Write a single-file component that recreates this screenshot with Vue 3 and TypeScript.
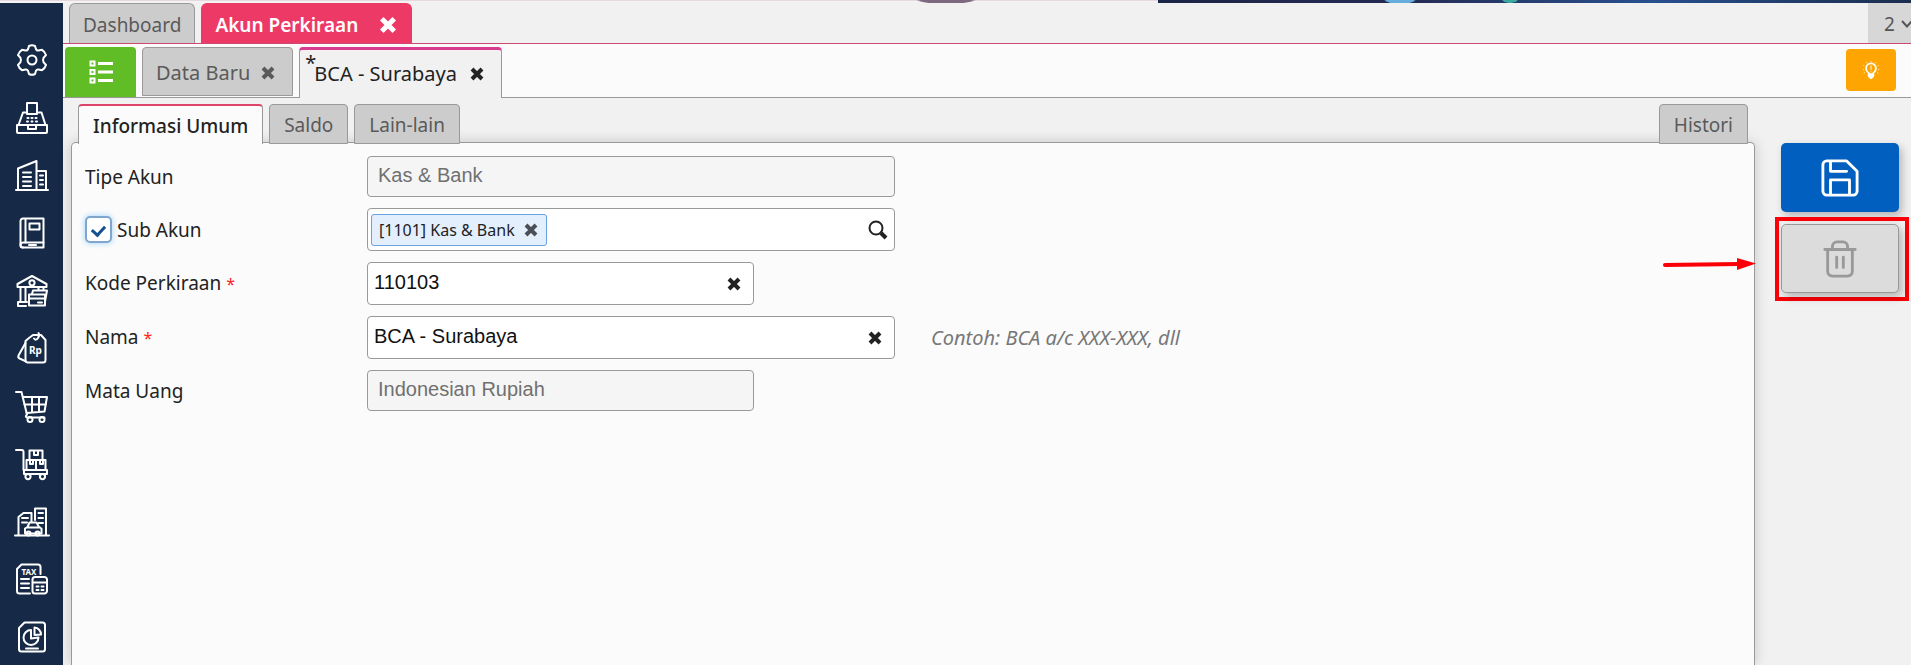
<script setup lang="ts">
import { ref } from 'vue'

interface MenuItem {
  name: string
  paths: string[]
  label?: { text: string; x: number; y: number; size: number }
}

const menu: MenuItem[] = [
  {
    name: 'Pengaturan',
    paths: [
      'M13 2Q16 .5 19 2L20 5.200Q20.800 6.800 22.500 6.500L26 5.800Q29 7.600 30 11L27.500 13.800Q26.600 16 27.500 18.200L30 21Q29 24.400 26 26.200L22.500 25.500Q20.800 25.200 20 26.800L19 30Q16 31.500 13 30L12 26.800Q11.200 25.200 9.500 25.500L6 26.200Q3 24.400 2 21L4.500 18.200Q5.400 16 4.500 13.800L2 11Q3 7.600 6 5.800L9.500 6.500Q11.200 6.800 12 5.200Z',
      'M16 11.500a4.500 4.500 0 1 0 0 9a4.500 4.500 0 1 0 0-9z'
    ]
  },
  {
    name: 'Kasir',
    paths: [
      'M1 23h30v7a1 1 0 0 1-1 1H2a1 1 0 0 1-1-1z',
      'M2.500 23L7 10.500H11M21 10.500h4.500L29.500 23',
      'M11 12V1h10v11z',
      'M12 23.500v3.500h8v-3.500',
      'M11.500 16h1M15.500 16h1M19.500 16h1M11 19.500h1M15.500 19.500h1M20 19.500h1'
    ]
  },
  {
    name: 'Perusahaan',
    paths: ['M0 31h32M2 31V9.500L20.500 2v29M20.500 12H30v19', 'M7 13.500h8M7 18h8M7 22.500h8M7 27h8M24 16.500h3M24 21h3M24 25.500h3']
  },
  {
    name: 'Buku Besar',
    paths: ['M7 1.500h20.500v29H7a2.500 2.500 0 0 1-2.500-2.500V4A2.500 2.500 0 0 1 7 1.500zM9.500 1.500v24', 'M13.500 6.500h10v6h-10z', 'M27.500 25.500H7a2.500 2.500 0 0 0 0 5M13 28h7']
  },
  {
    name: 'Kas & Bank',
    paths: [
      'M16 1L30.500 9v3h-29V9z',
      'M16 5.200a2.600 2.600 0 1 0 0 5.200a2.600 2.600 0 1 0 0-5.200z',
      'M4.500 12v14M9.500 12v14M22.500 12v3M27.500 12v3M2 31v-4h9M2 31h8',
      'M16 19l1-3.500h14l-2 11',
      'M13 19.500h16v11H13zM13 23.500h16M22 27.500h4'
    ]
  },
  {
    name: 'Penjualan',
    paths: ['M13 6l4-3h8l4.500 5v20a2.500 2.500 0 0 1-2.500 2.500H12A2.500 2.500 0 0 1 9.500 28V9z', 'M9.500 11L2.500 23.500q-.8 2 1.200 3l6 2.800', 'M18 6.500q2 2.500 4-.5t.5-5'],
    label: { text: 'Rp', x: 19.500, y: 21.500, size: 10 }
  },
  {
    name: 'Keranjang',
    paths: [
      'M0 2h5.500L11 24.500q-2.500 2.500.5 3h17',
      'M7 7h24l-2.500 14.500L10.500 23M8.500 14.500H30M16 7v15M23 7v15',
      'M14 27a2.500 2.500 0 1 0 0 5a2.500 2.500 0 1 0 0-5zM26 27a2.500 2.500 0 1 0 0 5a2.500 2.500 0 1 0 0-5z'
    ]
  },
  {
    name: 'Gudang',
    paths: [
      'M0 2h5.500q2 0 2 2v18',
      'M13.500 2.500h13V12h-13zM18 3v4h4V3M10.500 12H20v10h-9.500zM20 12h9.500v10H20zM14 12v4h3v-4M24 12v4h3v-4',
      'M8 22h23v4H8z',
      'M12 26a2.600 2.600 0 1 0 0 5.200a2.600 2.600 0 1 0 0-5.200zM26.500 26a2.600 2.600 0 1 0 0 5.200a2.600 2.600 0 1 0 0-5.200z'
    ]
  },
  {
    name: 'Aset Tetap',
    paths: [
      'M-1 29.500h34M2.500 29V11l5-4h8v9M19 14V2.500h11V29',
      'M6 12h6M6 16.500h5M22.500 7h4.500M22.500 12h4.500M22.500 17h4.500',
      'M9 27.500v-5l2.500-1.500 2-4.500h7l2.500 4.500 2.500 1.500v5zM11 21.500h13',
      'M12.500 25.500a2 2 0 1 0 0 4a2 2 0 1 0 0-4zM21.500 25.500a2 2 0 1 0 0 4a2 2 0 1 0 0-4z'
    ]
  },
  {
    name: 'Pajak',
    paths: [
      'M14 30.500H3.500A2.500 2.500 0 0 1 1 28V6l4.500-4.500H22A2.500 2.500 0 0 1 24.500 4v7',
      'M5 16h8M5 20.500h8M5 25h8',
      'M19 14h9.500a2.500 2.500 0 0 1 2.500 2.500V28a2.500 2.500 0 0 1-2.500 2.500H19a2.500 2.500 0 0 1-2.500-2.500V16.500A2.500 2.500 0 0 1 19 14zM16.500 19.500H31M20.500 23.500h2M25.500 23.500h2M20.500 27h2M25.500 27h2'
    ],
    label: { text: 'TAX', x: 13, y: 11.500, size: 8 }
  },
  {
    name: 'Laporan',
    paths: [
      'M8.500 1.500h18A2.500 2.500 0 0 1 29 4v24a2.500 2.500 0 0 1-2.500 2.500h-21A2.500 2.500 0 0 1 3 28V7z',
      'M15 9a7.500 7.500 0 1 0 7.500 7.500l-7.500 1z',
      'M18.500 6.500a7 7 0 0 1 6.500 7l-6.500.5z',
      'M10 27.500h12'
    ]
  }
]

const subAkun = ref(true)
const kode = ref('110103')
const nama = ref('BCA - Surabaya')
</script>

<template>
  <div class="app">
    <div class="banner"></div>
    <div class="shell">
      <nav class="sidebar" aria-label="Menu utama">
        <button v-for="item in menu" :key="item.name" type="button" class="menu-button" :aria-label="item.name">
          <svg viewBox="0 0 32 32" class="menu-icon">
            <path v-for="(d, i) in item.paths" :key="i" :d="d" />
            <text v-if="item.label" :x="item.label.x" :y="item.label.y" :font-size="item.label.size" text-anchor="middle">{{ item.label.text }}</text>
          </svg>
        </button>
      </nav>

      <main class="content">
        <header class="module-tabs">
          <button type="button" class="tab module-tab">Dashboard</button>
          <div class="tab module-tab module-active">
            <span>Akun Perkiraan</span>
            <button type="button" class="close" aria-label="Tutup Akun Perkiraan">
              <svg viewBox="0 0 16 16" class="cross cross-large"><path d="M3 3l10 10M13 3L3 13" /></svg>
            </button>
          </div>
          <button type="button" class="tab-count">
            <span>2</span>
            <svg viewBox="0 0 12 8" class="chevron"><path d="M1 1l5 5.500L11 1" /></svg>
          </button>
        </header>

        <div class="record-tabs">
          <button type="button" class="list-button" aria-label="Daftar">
            <svg viewBox="0 0 24 24" class="list-icon">
              <path class="bullets" d="M1.500 1.500h4v4h-4zM1.500 10h4v4h-4zM1.500 18.500h4v4h-4z" />
              <path d="M9 3.500h15M9 12h15M9 20.500h15" />
            </svg>
          </button>
          <div class="tab record-tab">
            <span>Data Baru</span>
            <button type="button" class="close" aria-label="Tutup Data Baru">
              <svg viewBox="0 0 16 16" class="cross"><path d="M3 3l10 10M13 3L3 13" /></svg>
            </button>
          </div>
          <div class="tab record-tab record-active">
            <span class="dirty">*</span>
            <span>BCA - Surabaya</span>
            <button type="button" class="close" aria-label="Tutup BCA - Surabaya">
              <svg viewBox="0 0 16 16" class="cross"><path d="M3 3l10 10M13 3L3 13" /></svg>
            </button>
          </div>
          <button type="button" class="tip-button" aria-label="Petunjuk">
            <svg viewBox="0 0 20 22" class="tip-icon">
              <path class="bulb" d="M7.500 16v-1.500C5 12.500 4.500 11 4.500 9.200a5.500 5.500 0 0 1 11 0c0 1.800-.5 3.300-3 5.300V16z" />
              <path class="bulb-base" d="M7 15.500h6v2.500l-2 2.500H9L7 18z" />
              <path d="M10 6v5M10 12.500v1M10 1v1M5 2.500l.5.800M15 2.500l-.5.800M1.500 6l1 .5M18.500 6l-1 .5M1 10.500h1M18 10.500h1M2 14.500l1-.5M18 14.500l-1-.5" />
            </svg>
          </button>
        </div>

        <div class="workspace">
          <section class="editor">
            <div class="section-tabs">
              <button type="button" class="tab section-tab section-active">Informasi Umum</button>
              <button type="button" class="tab section-tab">Saldo</button>
              <button type="button" class="tab section-tab">Lain-lain</button>
              <button type="button" class="tab section-tab history">Histori</button>
            </div>

            <form class="panel" @submit.prevent>
              <div class="row">
                <label class="label" for="tipe">Tipe Akun</label>
                <input id="tipe" class="field locked" value="Kas &amp; Bank" disabled />
              </div>
              <div class="row">
                <label class="label check-label">
                  <input v-model="subAkun" type="checkbox" class="check" />
                  <span>Sub Akun</span>
                </label>
                <div class="field lookup">
                  <span class="chip">
                    <span>[1101] Kas &amp; Bank</span>
                    <button type="button" class="close" aria-label="Hapus Kas &amp; Bank">
                      <svg viewBox="0 0 16 16" class="cross"><path d="M3 3l10 10M13 3L3 13" /></svg>
                    </button>
                  </span>
                  <button type="button" class="close" aria-label="Cari akun">
                    <svg viewBox="0 0 20 20" class="search"><circle cx="8" cy="8" r="6.500" /><path class="handle" d="M13 13l5 5" /></svg>
                  </button>
                </div>
              </div>
              <div class="row">
                <label class="label" for="kode">Kode Perkiraan <span class="required">*</span></label>
                <div class="field short">
                  <input id="kode" v-model="kode" class="text-input" />
                  <button type="button" class="close" aria-label="Kosongkan kode" @click="kode = ''">
                    <svg viewBox="0 0 16 16" class="cross"><path d="M3 3l10 10M13 3L3 13" /></svg>
                  </button>
                </div>
              </div>
              <div class="row">
                <label class="label" for="nama">Nama <span class="required">*</span></label>
                <div class="field">
                  <input id="nama" v-model="nama" class="text-input" />
                  <button type="button" class="close" aria-label="Kosongkan nama" @click="nama = ''">
                    <svg viewBox="0 0 16 16" class="cross"><path d="M3 3l10 10M13 3L3 13" /></svg>
                  </button>
                </div>
                <em class="hint">Contoh: BCA a/c XXX-XXX, dll</em>
              </div>
              <div class="row">
                <label class="label" for="mata">Mata Uang</label>
                <input id="mata" class="field short locked" value="Indonesian Rupiah" disabled />
              </div>
            </form>
          </section>

          <aside class="actions">
            <button type="button" class="action save" aria-label="Simpan">
              <svg viewBox="0 0 40 40" class="action-icon">
                <path d="M6 2h21l11 11v21a4 4 0 0 1-4 4H6a4 4 0 0 1-4-4V6a4 4 0 0 1 4-4zM10 2v11h17M10 38V22h20v16" />
              </svg>
            </button>
            <div class="highlight">
              <svg viewBox="0 0 94 14" class="arrow"><path class="shaft" d="M2 8L76 7" /><path class="head" d="M74 1l19 5.500L74 13z" /></svg>
              <button type="button" class="action delete" aria-label="Hapus" disabled>
                <svg viewBox="0 0 40 40" class="action-icon">
                  <path d="M4 10h32M7 10v23a5 5 0 0 0 5 5h16a5 5 0 0 0 5-5V10M12 10V7a5 5 0 0 1 5-5h6a5 5 0 0 1 5 5v3M16.500 18v11M23.500 18v11" />
                </svg>
              </button>
            </div>
          </aside>
        </div>
      </main>
    </div>
  </div>
</template>

<style>
body {
  margin: 0;
  background: #f1f1f1;
}
</style>

<style scoped>
.app,
.app * {
  box-sizing: border-box;
}

.app {
  display: flex;
  flex-direction: column;
  min-height: 100vh;
  font-family: "Noto Sans", "Open Sans", sans-serif;
  font-size: 19px;
  line-height: 26px;
  color: #222;
}

button {
  padding: 0;
  border: 0;
  background: none;
  color: inherit;
  font: inherit;
}

svg {
  display: block;
  overflow: visible;
  fill: none;
  stroke: currentColor;
}

.banner {
  height: 3px;
  background:
    radial-gradient(ellipse 30px 4px at 946px 0, #7d6880 85%, transparent),
    radial-gradient(ellipse 16px 4px at 1400px 0, #66aede 85%, transparent),
    radial-gradient(ellipse 8px 3px at 1510px 0, #38a99c 85%, transparent),
    linear-gradient(90deg, transparent 1158px, #1b2547 1158px, #252a52 1400px, #28508f 1650px, #1b2d4d),
    linear-gradient(#e7d8df 1px, #f3f3f3 1px);
}

.shell {
  flex: 1;
  display: flex;
}

.sidebar {
  flex: none;
  width: 63px;
  padding: 41px 0 12px;
  display: flex;
  flex-direction: column;
  align-items: center;
  justify-content: space-between;
  background: #162a47;
  color: #fff;
}

.menu-icon {
  width: 32px;
  height: 32px;
  stroke-width: 2;
  stroke-linejoin: round;
  stroke-linecap: round;
}

.menu-icon text {
  fill: currentColor;
  stroke: none;
  font-weight: 700;
}

.content {
  flex: 1;
  min-width: 0;
  display: flex;
  flex-direction: column;
}

.tab {
  display: flex;
  align-items: center;
  border: 1px solid #999;
  background: #ccc;
  color: #5a5a5a;
  white-space: nowrap;
}

.module-tabs {
  display: flex;
  gap: 6px;
  height: 41px;
  padding-left: 6px;
  border-bottom: 1px solid #cb4a73;
}

.module-tab {
  padding: 2px 13px 0;
  border-bottom: 0;
  border-radius: 6px 6px 0 0;
}

.module-active {
  gap: 20px;
  border-color: #ed3966;
  background: #ed3966;
  color: #fff;
  font-weight: 600;
}

.tab-count {
  display: flex;
  align-items: center;
  gap: 6px;
  width: 43px;
  margin-left: auto;
  padding: 2px 0 0 16px;
  background: #d7d7d7;
  color: #555;
  overflow: hidden;
}

.chevron {
  flex: none;
  width: 12px;
  height: 8px;
  stroke-width: 2;
}

.close {
  display: flex;
  align-items: center;
  flex: none;
}

.cross {
  width: 16px;
  height: 16px;
  stroke-width: 4;
}

.cross-large {
  width: 20px;
  height: 20px;
}

.record-tabs {
  display: flex;
  height: 54px;
  padding: 3px 15px 0 2px;
  gap: 6px;
  border-bottom: 1px solid #999;
  background: #fbfbfb;
}

.list-button {
  display: grid;
  place-items: center;
  width: 71px;
  border-radius: 4px 4px 0 0;
  background: #61bd26;
  color: #fff;
}

.list-icon {
  width: 24px;
  height: 24px;
  stroke-width: 3;
}

.bullets {
  stroke-width: 2;
}

.record-tab {
  gap: 10px;
  margin-bottom: 1px;
  padding: 2px 16px 0 13px;
  border-radius: 4px 4px 0 0;
  font-size: 20px;
}

.record-active {
  position: relative;
  gap: 12px;
  margin-bottom: -1px;
  padding: 0 16px 0 14px;
  border-bottom: 0;
  border-top: 3px solid #d93c8f;
  background: #f1f1f1;
  color: #222;
}

.dirty {
  position: absolute;
  left: 5px;
  top: 0;
}

.tip-button {
  display: grid;
  place-items: center;
  align-self: flex-start;
  width: 50px;
  height: 42px;
  margin: 2px 0 0 auto;
  border-radius: 4px;
  background: #ffa502;
  color: #fff;
}

.tip-icon {
  width: 18px;
  height: 20px;
}

.bulb {
  stroke-width: 2;
}

.bulb-base {
  fill: currentColor;
}

.workspace {
  flex: 1;
  display: flex;
  gap: 20px;
  padding: 6px 2px 0 8px;
}

.editor {
  flex: 1;
  min-width: 0;
  display: flex;
  flex-direction: column;
}

.section-tabs {
  display: flex;
  gap: 6px;
  padding: 0 7px;
}

.section-tab {
  position: relative;
  height: 40px;
  padding: 2px 14px 0;
  margin-bottom: -2px;
  border-radius: 4px 4px 0 0;
}

.section-active {
  border-top: 2px solid #dc4568;
  border-bottom: 0;
  background: #fbfbfb;
  color: #222;
  font-weight: 500;
}

.history {
  margin-left: auto;
}

.panel {
  flex: 1;
  display: flex;
  flex-direction: column;
  gap: 11px;
  padding: 13px;
  border: 1px solid #999;
  border-bottom: 0;
  border-radius: 5px 5px 0 0;
  background: #fbfbfb;
  box-shadow: 0 0 14px rgba(0, 0, 0, 0.18);
}

.row {
  display: flex;
  align-items: center;
}

.label {
  flex: none;
  width: 282px;
}

.check-label {
  display: flex;
  align-items: center;
  gap: 5px;
}

.check {
  appearance: none;
  display: grid;
  place-items: center;
  width: 27px;
  height: 27px;
  margin: 0;
  border: 2px solid #7ea6cf;
  border-radius: 5px;
  background: #fff;
  box-shadow: 0 0 6px #9fd0fa;
}

.check:checked::after {
  content: "";
  width: 6px;
  height: 10px;
  border: solid #14508f;
  border-width: 0 3px 3px 0;
  transform: rotate(42deg);
}

.required {
  color: #f22;
  font-size: 16px;
}

.field {
  display: flex;
  align-items: center;
  justify-content: space-between;
  width: 528px;
  height: 43px;
  padding: 0 11px 0 6px;
  border: 1px solid #999;
  border-radius: 4px;
  background: #fff;
  font-family: "Liberation Sans", Arial, sans-serif;
  font-size: 20px;
}

.short {
  width: 387px;
}

.locked {
  height: 41px;
  padding: 0 10px 2px;
  background: #f5f5f5;
  color: #707070;
}

.text-input {
  flex: 1;
  min-width: 0;
  padding: 0 0 4px;
  border: 0;
  outline: 0;
  background: none;
  color: #111;
  font: inherit;
}

.lookup {
  padding: 0 6px 0 3px;
}

.chip {
  display: flex;
  align-items: center;
  gap: 8px;
  height: 32px;
  padding: 0 7px;
  border: 1px solid #68a2e2;
  border-radius: 3px;
  background: #e3effd;
  font-family: "Noto Sans", "Open Sans", sans-serif;
  font-size: 16px;
}

.chip .cross {
  color: #4a4f57;
}

.search {
  width: 20px;
  height: 20px;
  stroke-width: 2;
}

.handle {
  stroke-width: 4;
}

.hint {
  margin-left: 36px;
  color: #777;
  font-size: 20px;
}

.actions {
  flex: none;
  display: flex;
  flex-direction: column;
  gap: 5px;
  padding-top: 39px;
}

.action {
  display: grid;
  place-items: center;
  width: 118px;
  height: 69px;
  border-radius: 5px;
  box-shadow: 3px 4px 8px rgba(0, 0, 0, 0.25);
}

.save {
  margin-left: 6px;
  background: #005fbf;
  color: #fff;
}

.action-icon {
  width: 38px;
  height: 38px;
  stroke-width: 3;
  stroke-linecap: round;
  stroke-linejoin: round;
}

.highlight {
  position: relative;
  padding: 3px 6px 4px 2px;
  border: 4px solid #fb0007;
}

.delete {
  border: 1px solid #999;
  background: #dcdcdc;
  color: #999;
}

.arrow {
  position: absolute;
  right: 148px;
  top: 36px;
  width: 94px;
  height: 14px;
  color: #fb0007;
}

.shaft {
  stroke-width: 4;
  stroke-linecap: round;
}

.head {
  fill: currentColor;
  stroke: none;
}
</style>
